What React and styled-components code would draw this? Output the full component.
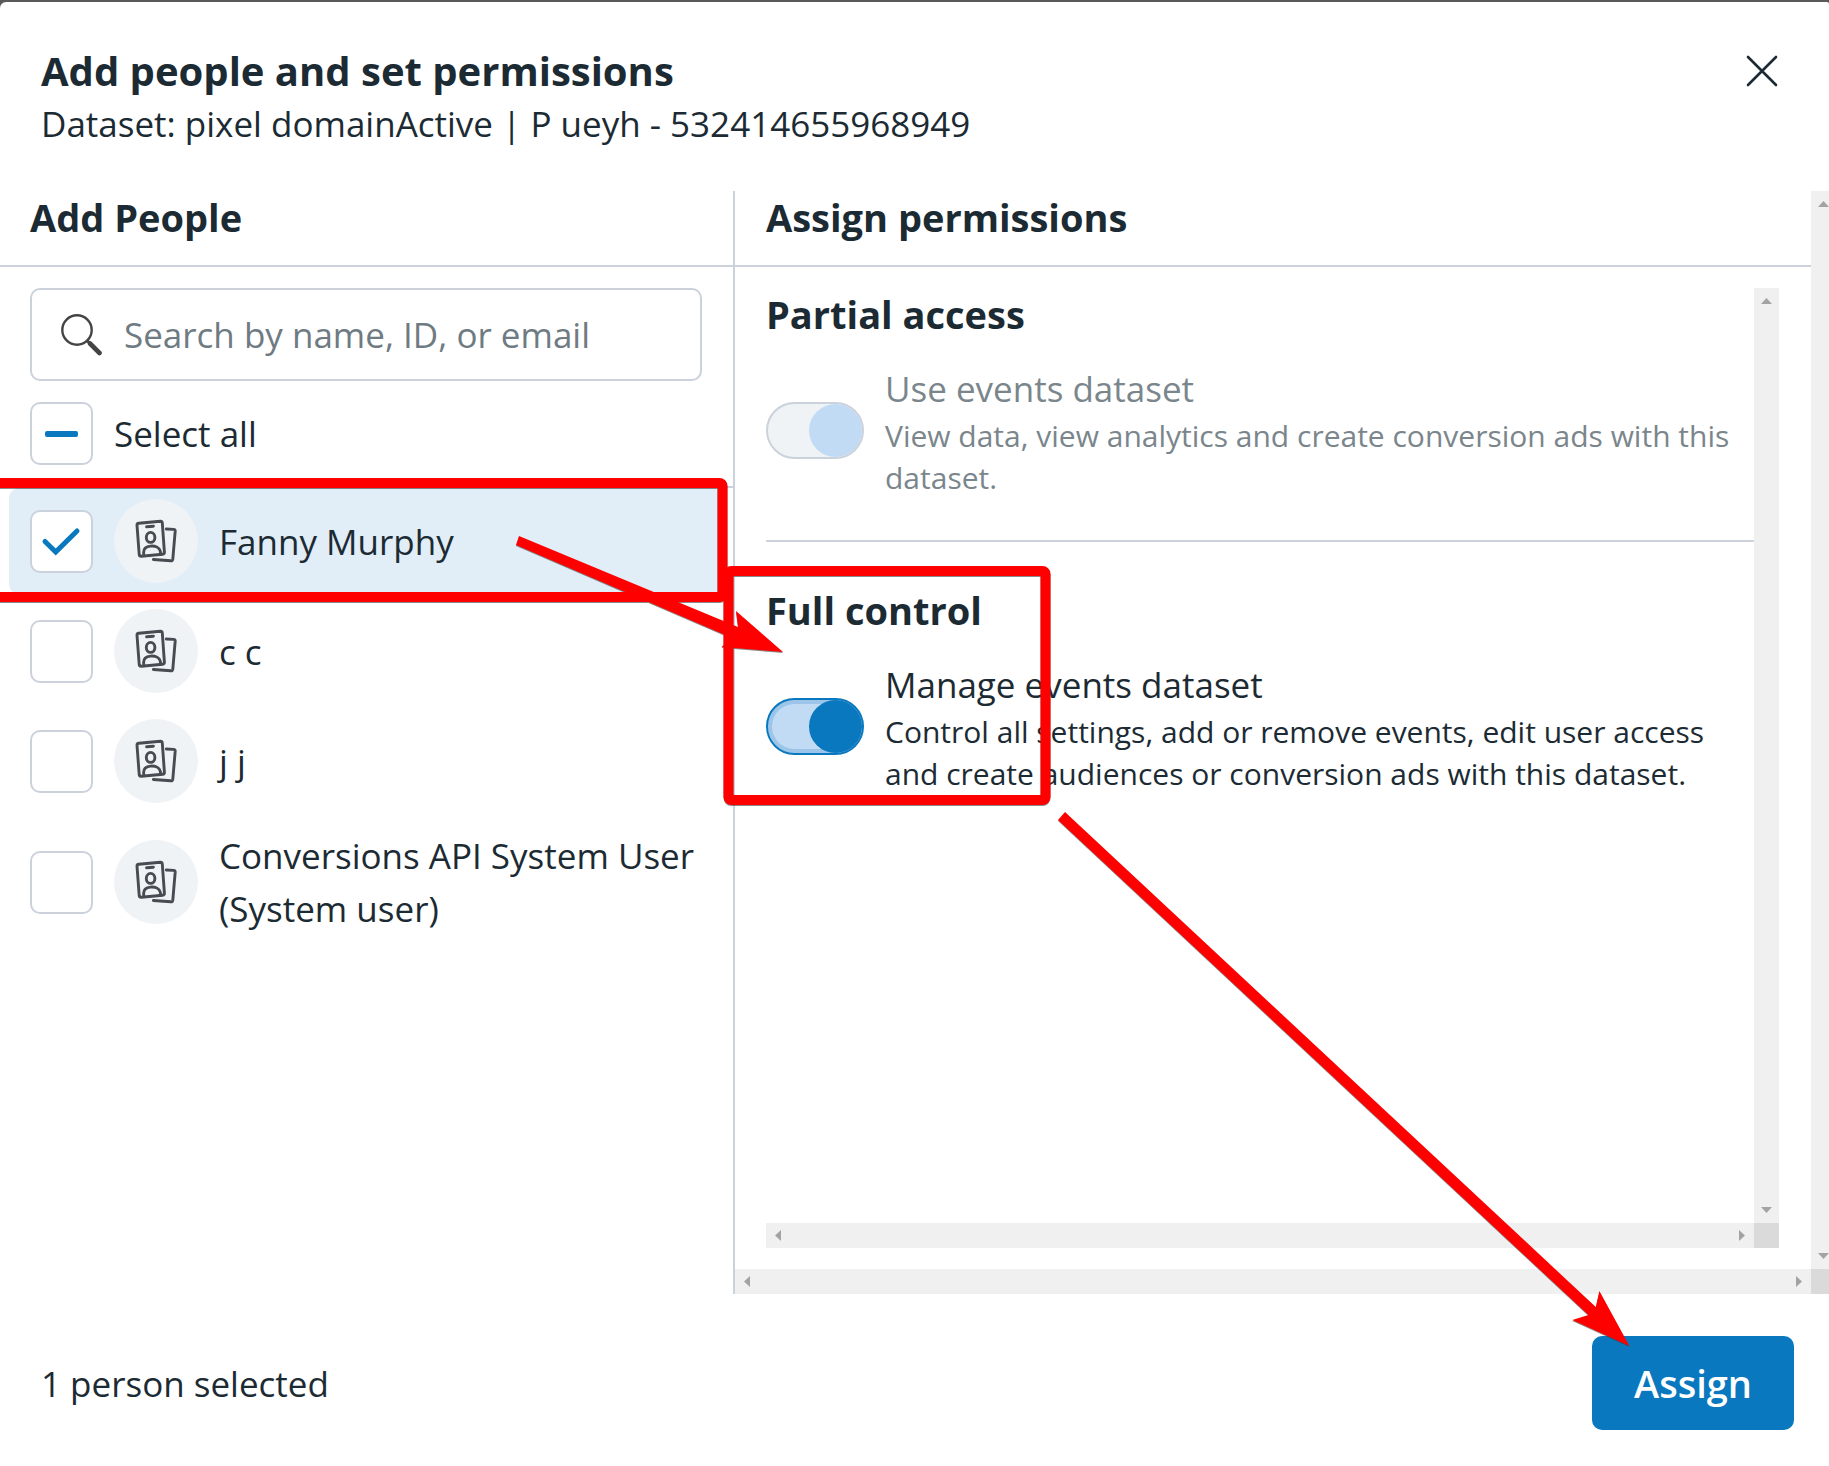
import React, { useState } from 'react';
import styled, { createGlobalStyle } from 'styled-components';

const GlobalStyle = createGlobalStyle`
* {
  box-sizing: border-box;
}
body {
  margin: 0;
  background: #595b5b;
  color: #1c2b33;
  font-family: 'Open Sans', 'Noto Sans', sans-serif;
  font-size: 35px;
}
`
const Modal = styled.main`
position: relative;
display: flex;
flex-direction: column;
min-height: calc(100vh - 2px);
margin-top: 2px;
background: #fff;
border-radius: 6px 2px 0 0;
overflow: hidden;
`
const ModalHeader = styled.header`
display: flex;
justify-content: space-between;
align-items: flex-start;
padding: 45px 51px 38px 41px;
`
const Title = styled.h1`
margin: 0;
font-size: 40px;
font-weight: 700;
line-height: 48px;
`
const Subtitle = styled.p`
margin: 0;
line-height: 58px;
`
const CloseButton = styled.button`
display: flex;
padding: 8px 0;
border: 0;
background: none;
cursor: pointer;
`
const ModalBody = styled.div`
display: flex;
flex: 1;
`
const PeoplePanel = styled.section`
flex: 0 0 735px;
border-right: 2px solid #cbd2dc;
`
const PanelTitle = styled.h2`
margin: 0;
padding: 0 32px 22px ${props => props.$inset}px;
border-bottom: 2px solid #cbd2dc;
font-size: 38px;
font-weight: 700;
line-height: 52px;
`
const PeopleTools = styled.div`
display: flex;
flex-direction: column;
gap: 21px;
padding: 21px 31px 21px 30px;
border-bottom: 2px solid #cbd2dc;
`
const SearchField = styled.label`
display: flex;
align-items: center;
gap: 21px;
height: 93px;
padding: 0 29px;
border: 2px solid #cbd2dc;
border-radius: 10px;
`
const SearchInput = styled.input`
flex: 1;
min-width: 0;
padding: 0;
border: 0;
outline: 0;
background: none;
color: inherit;
font: inherit;

&::placeholder {
    color: #6f7b82;
    opacity: 1;
}
`
const SelectAll = styled.label`
display: flex;
align-items: center;
gap: 21px;
`
const PeopleList = styled.ul`
display: flex;
flex-direction: column;
gap: 4px;
margin: 0;
padding: 0 9px;
list-style: none;
`
const PersonRow = styled.label`
display: flex;
align-items: center;
gap: 21px;
min-height: 106px;
padding: 11px 0 11px 21px;
border-radius: 10px;
background: ${props => props.$selected ? '#e1edf7' : 'transparent'};
line-height: 53px;
`
const Avatar = styled.span`
display: flex;
flex: 0 0 84px;
height: 84px;
border-radius: 50%;
background: #eff3f6;
`
const CheckboxWrapper = styled.span`
display: grid;
flex: 0 0 63px;
height: 63px;

> * {
    grid-area: 1 / 1;
}
> svg {
    z-index: 1;
    pointer-events: none;
}
`
const CheckboxInput = styled.input`
appearance: none;
width: 63px;
height: 63px;
margin: 0;
border: 2px solid #cbd2dc;
border-radius: 10px;
background: #fff;
cursor: pointer;
`
const ScrollFrame = styled.div`
display: grid;
flex: 1;
grid-template-columns: minmax(0, 1fr) 25px;
grid-template-rows: minmax(0, 1fr) 25px;
`
const PermissionsPanel = styled(ScrollFrame)`
margin-right: -7px;
`
const PermissionsContent = styled.section`
display: flex;
flex-direction: column;
`
const PermissionsBody = styled.div`
display: flex;
flex: 1;
padding: 21px 32px 21px 31px;
`
const Track = styled.span`
display: flex;
flex-direction: ${props => props.$vertical ? 'column' : 'row'};
align-items: center;
justify-content: space-between;
padding: ${props => props.$vertical ? '10px 0' : '0 9px'};
background: #f0f0f0;
`
const TrackCorner = styled.span`
background: #dadada;
`
const arrowShapes = {
  up: 'polygon(50% 0, 100% 100%, 0 100%)',
  down: 'polygon(0 0, 100% 0, 50% 100%)',
  left: 'polygon(0 50%, 100% 0, 100% 100%)',
  right: 'polygon(0 0, 100% 50%, 0 100%)',
}
const TrackArrow = styled.span`
width: ${props => ['up', 'down'].includes(props.$to) ? 11 : 6}px;
height: ${props => ['up', 'down'].includes(props.$to) ? 6 : 11}px;
background: #a3a3a3;
clip-path: ${props => arrowShapes[props.$to]};
`
const PermissionGroup = styled.section`
& + & {
    margin-top: 41px;
    padding-top: 42px;
    border-top: 2px solid #cbd2dc;
}
`
const GroupTitle = styled.h3`
margin: 0 0 22px;
font-size: 38px;
font-weight: 700;
line-height: 52px;
`
const Permission = styled.label`
display: flex;
align-items: center;
gap: 21px;
color: ${props => props.$disabled ? '#7a868c' : 'inherit'};
`
const PermissionName = styled.span`
display: block;
line-height: 53px;
`
const PermissionText = styled.span`
display: block;
font-size: 30px;
line-height: 42px;
`
const Switch = styled.input`
appearance: none;
display: flex;
justify-content: ${props => props.checked ? 'flex-end' : 'flex-start'};
flex: 0 0 98px;
height: 57px;
margin: 0;
border: 2px solid #0a78be;
border-radius: 29px;
background: #c2dbf5;
box-shadow: inset 0 0 0 4px #9cc5e9;
cursor: pointer;

&::before {
    content: '';
    width: 53px;
    height: 53px;
    border-radius: 50%;
    background: #0a78be;
}
&:disabled {
    border-color: #cbd2dc;
    background: #eff3f6;
    box-shadow: none;
    cursor: default;
}
&:disabled::before {
    background: #c2dbf5;
}
`
const ModalFooter = styled.footer`
display: flex;
justify-content: space-between;
align-items: center;
padding: 42px 35px 36px 41px;
`
const AssignButton = styled.button`
height: 94px;
padding: 0 42px;
border: 0;
border-radius: 10px;
background: #0a78be;
color: #fff;
font-family: inherit;
font-size: 38px;
font-weight: 600;
cursor: pointer;
`
const Annotations = styled.svg`
position: absolute;
top: -2px;
left: 0;
pointer-events: none;
filter: drop-shadow(0 1px 0 rgba(60, 60, 60, 0.6));
`

const CloseIcon = () => (
  <svg width="32" height="32" viewBox="0 0 32 32" fill="none" stroke="#1c2b33" strokeWidth="2.6" strokeLinecap="round">
    <path d="M2 2L30 30M30 2L2 30" />
  </svg>
)

const SearchIcon = () => (
  <svg width="42" height="42" viewBox="0 0 42 42" fill="none" stroke="#444" strokeLinecap="round">
    <circle cx="16" cy="16" r="14.7" strokeWidth="2.4" />
    <path d="M26.5 27L29 29.5" strokeWidth="3" />
    <path d="M29 29.5L38.5 39" strokeWidth="4.6" />
  </svg>
)

const BadgeIcon = () => (
  <svg width="84" height="84" viewBox="0 0 84 84" fill="none" stroke="#474b52" strokeWidth="2.9" strokeLinecap="round" strokeLinejoin="round">
    <path d="M24.8 24.2L46.4 22.3Q48.2 22.2 48.3 24L50.4 53.2Q50.5 55 48.7 55.2L27.3 57.2Q25.4 57.3 25.2 55.5L23 26.2Q22.9 24.4 24.8 24.2Z" />
    <path d="M32.6 27.8L39.4 27.2" />
    <ellipse cx="36.6" cy="38.4" rx="4.3" ry="5" />
    <path d="M29.8 56.5L29.6 53.5C29.6 49.5 32.5 47.4 36.5 47.1C41.5 46.8 45.8 48.8 46.4 52.5L46.6 55" />
    <path d="M52.3 30L59.6 30.4Q61.3 30.6 61.2 32.2L58.8 60.2Q58.6 62 56.8 61.8L39.4 60.5" />
  </svg>
)

const CheckMark = () => (
  <svg width="63" height="63" viewBox="0 0 63 63" fill="none" stroke="#0a78be" strokeWidth="5" strokeLinecap="round">
    <path d="M15 31.5L25.7 42L47 21" />
  </svg>
)

const DashMark = () => (
  <svg width="63" height="63" viewBox="0 0 63 63">
    <rect x="15" y="29" width="33" height="6" rx="2" fill="#0a78be" />
  </svg>
)

const Checkbox = ({ checked, mixed, onChange }) => (
  <CheckboxWrapper>
    <CheckboxInput type="checkbox" checked={checked} onChange={onChange} aria-checked={mixed ? 'mixed' : checked} />
    {mixed && <DashMark />}
    {checked && !mixed && <CheckMark />}
  </CheckboxWrapper>
)

const Scrollbars = () => (
  <>
    <Track $vertical aria-hidden="true">
      <TrackArrow $to="up" />
      <TrackArrow $to="down" />
    </Track>
    <Track aria-hidden="true">
      <TrackArrow $to="left" />
      <TrackArrow $to="right" />
    </Track>
    <TrackCorner aria-hidden="true" />
  </>
)

const people = ['Fanny Murphy', 'c c', 'j j', 'Conversions API System User (System user)']

const App = () => {
  const [selected, setSelected] = useState(['Fanny Murphy'])
  const [search, setSearch] = useState('')
  const [fullControl, setFullControl] = useState(true)

  const allSelected = selected.length === people.length
  const toggleAll = () => setSelected(allSelected ? [] : people)
  const togglePerson = (name) => {
    setSelected(selected.includes(name) ? selected.filter(item => item !== name) : [...selected, name])
  }

  return (
    <>
      <GlobalStyle />
      <Modal>
        <ModalHeader>
          <div>
            <Title>Add people and set permissions</Title>
            <Subtitle>Dataset: pixel domainActive | P ueyh - 532414655968949</Subtitle>
          </div>
          <CloseButton type="button" aria-label="Close">
            <CloseIcon />
          </CloseButton>
        </ModalHeader>
        <ModalBody>
          <PeoplePanel>
            <PanelTitle $inset={30}>Add People</PanelTitle>
            <PeopleTools>
              <SearchField>
                <SearchIcon />
                <SearchInput
                  type="text"
                  aria-label="Search people"
                  placeholder="Search by name, ID, or email"
                  value={search}
                  onChange={(event) => setSearch(event.target.value)}
                />
              </SearchField>
              <SelectAll>
                <Checkbox checked={allSelected} mixed={selected.length > 0 && !allSelected} onChange={toggleAll} />
                <span>Select all</span>
              </SelectAll>
            </PeopleTools>
            <PeopleList>
              {people.filter(name => name.toLowerCase().includes(search.toLowerCase())).map(name => (
                <li key={name}>
                  <PersonRow $selected={selected.includes(name)}>
                    <Checkbox checked={selected.includes(name)} onChange={() => togglePerson(name)} />
                    <Avatar><BadgeIcon /></Avatar>
                    <span>{name}</span>
                  </PersonRow>
                </li>
              ))}
            </PeopleList>
          </PeoplePanel>
          <PermissionsPanel>
            <PermissionsContent>
              <PanelTitle $inset={31}>Assign permissions</PanelTitle>
              <PermissionsBody>
                <ScrollFrame>
                  <div>
                    <PermissionGroup>
                      <GroupTitle>Partial access</GroupTitle>
                      <Permission $disabled>
                        <Switch type="checkbox" role="switch" checked disabled readOnly />
                        <span>
                          <PermissionName>Use events dataset</PermissionName>
                          <PermissionText>
                            View data, view analytics and create conversion ads with this dataset.
                          </PermissionText>
                        </span>
                      </Permission>
                    </PermissionGroup>
                    <PermissionGroup>
                      <GroupTitle>Full control</GroupTitle>
                      <Permission>
                        <Switch
                          type="checkbox"
                          role="switch"
                          checked={fullControl}
                          onChange={() => setFullControl(!fullControl)}
                        />
                        <span>
                          <PermissionName>Manage events dataset</PermissionName>
                          <PermissionText>
                            Control all settings, add or remove events, edit user access and create
                            audiences or conversion ads with this dataset.
                          </PermissionText>
                        </span>
                      </Permission>
                    </PermissionGroup>
                  </div>
                  <Scrollbars />
                </ScrollFrame>
              </PermissionsBody>
            </PermissionsContent>
            <Scrollbars />
          </PermissionsPanel>
        </ModalBody>
        <ModalFooter>
          <span>{selected.length} person selected</span>
          <AssignButton type="button">Assign</AssignButton>
        </ModalFooter>
        <Annotations width="1829" height="1466" viewBox="0 0 1829 1466" fill="none" aria-hidden="true">
          <rect x="-20" y="483" width="742.5" height="114" rx="3" stroke="#f00" strokeWidth="10" />
          <path d="M519 536L738 627L736 611L783 652L721.5 647L732 638L516 545Z" fill="#f00" />
          <rect x="728.5" y="571" width="317" height="229" rx="3" stroke="#f00" strokeWidth="10" />
          <path d="M1065 812L1595.8 1307L1599.4 1291L1629.4 1346L1572.3 1320L1588.4 1315L1058 820Z" fill="#f00" />
        </Annotations>
      </Modal>
    </>
  )
}

export default App
